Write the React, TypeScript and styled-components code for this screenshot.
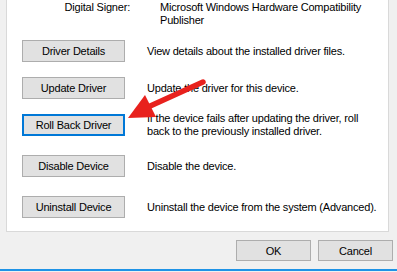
import React from "react";
import styled, { createGlobalStyle } from "styled-components";

const GlobalStyle = createGlobalStyle`
  html, body {
    margin: 0;
    padding: 0;
    background: #f0f0f0;
  }
  body {
    font-family: "Liberation Sans", Arial, sans-serif;
    font-size: 11px;
    letter-spacing: -0.2px;
    color: #000;
  }
`;

interface Action {
  label: string;
  text: string;
  focused?: boolean;
  gap: number;
}

const actions: Action[] = [
  { label: "Driver Details", text: "View details about the installed driver files.", gap: 13 },
  { label: "Update Driver", text: "Update the driver for this device.", gap: 15 },
  {
    label: "Roll Back Driver",
    text: "If the device fails after updating the driver, roll back to the previously installed driver.",
    focused: true,
    gap: 13,
  },
  { label: "Disable Device", text: "Disable the device.", gap: 17 },
  { label: "Uninstall Device", text: "Uninstall the device from the system (Advanced).", gap: 19 },
];

const App: React.FC = () => {
  return (
    <Page>
      <GlobalStyle />
      <Panel>
        <SignerRow>
          <SignerLabel>Digital Signer:</SignerLabel>
          <SignerValue>Microsoft Windows Hardware Compatibility Publisher</SignerValue>
        </SignerRow>
        {actions.map((a) => (
          <ActionRow key={a.label} $gap={a.gap}>
            <DlgButton $focused={a.focused}>{a.label}</DlgButton>
            <Description>{a.text}</Description>
          </ActionRow>
        ))}
      </Panel>
      <Footer>
        <DlgButton $width={75} $height={21}>OK</DlgButton>
        <DlgButton $width={75} $height={21}>Cancel</DlgButton>
      </Footer>
      <TaskLine />
      <Arrow width="397" height="272" viewBox="0 0 397 272">
        <line x1="203" y1="82" x2="148" y2="107" stroke="#e8211d" strokeWidth="5.5" strokeLinecap="round" />
        <polygon points="128,118 145,95 156,117" fill="#e8211d" />
      </Arrow>
    </Page>
  );
};

const Page = styled.div`
  position: relative;
  width: 397px;
  height: 272px;
  overflow: hidden;
  background: #f0f0f0;
`;

const Panel = styled.div`
  margin-left: 6px;
  width: 383px;
  box-sizing: border-box;
  background: #fff;
  border: 1px solid #d9d9d9;
  border-top: none;
  padding: 0 0 14px 15px;
  height: 232px;
`;

const SignerRow = styled.div`
  display: grid;
  grid-template-columns: 123px 210px;
  column-gap: 30px;
  margin-left: -15px;
  line-height: 13px;
`;

const SignerLabel = styled.div`
  text-align: right;
  padding-top: 1px;
`;

const SignerValue = styled.div`
  padding-top: 1px;
`;

const ActionRow = styled.div<{ $gap: number }>`
  display: grid;
  grid-template-columns: 103px 234px;
  column-gap: 22px;
  align-items: center;
  margin-top: ${({ $gap }) => $gap}px;
`;

const DlgButton = styled.div<{ $focused?: boolean; $width?: number; $height?: number }>`
  box-sizing: border-box;
  width: ${({ $width }) => $width ?? 103}px;
  height: ${({ $height }) => $height ?? 22}px;
  display: flex;
  align-items: center;
  justify-content: center;
  background: #e1e1e1;
  border: ${({ $focused }) => ($focused ? "2px solid #0078d7" : "1px solid #adadad")};
  font-size: 11px;
  white-space: nowrap;
`;

const Description = styled.div`
  line-height: 13px;
`;

const Footer = styled.div`
  display: flex;
  justify-content: flex-end;
  gap: 7px;
  height: 37px;
  box-sizing: border-box;
  padding: 8px 4px 0 0;
`;

const TaskLine = styled.div`
  height: 2px;
  background: #1e93e6;
`;

const Arrow = styled.svg`
  position: absolute;
  left: 0;
  top: 0;
  pointer-events: none;
`;

export default App;
